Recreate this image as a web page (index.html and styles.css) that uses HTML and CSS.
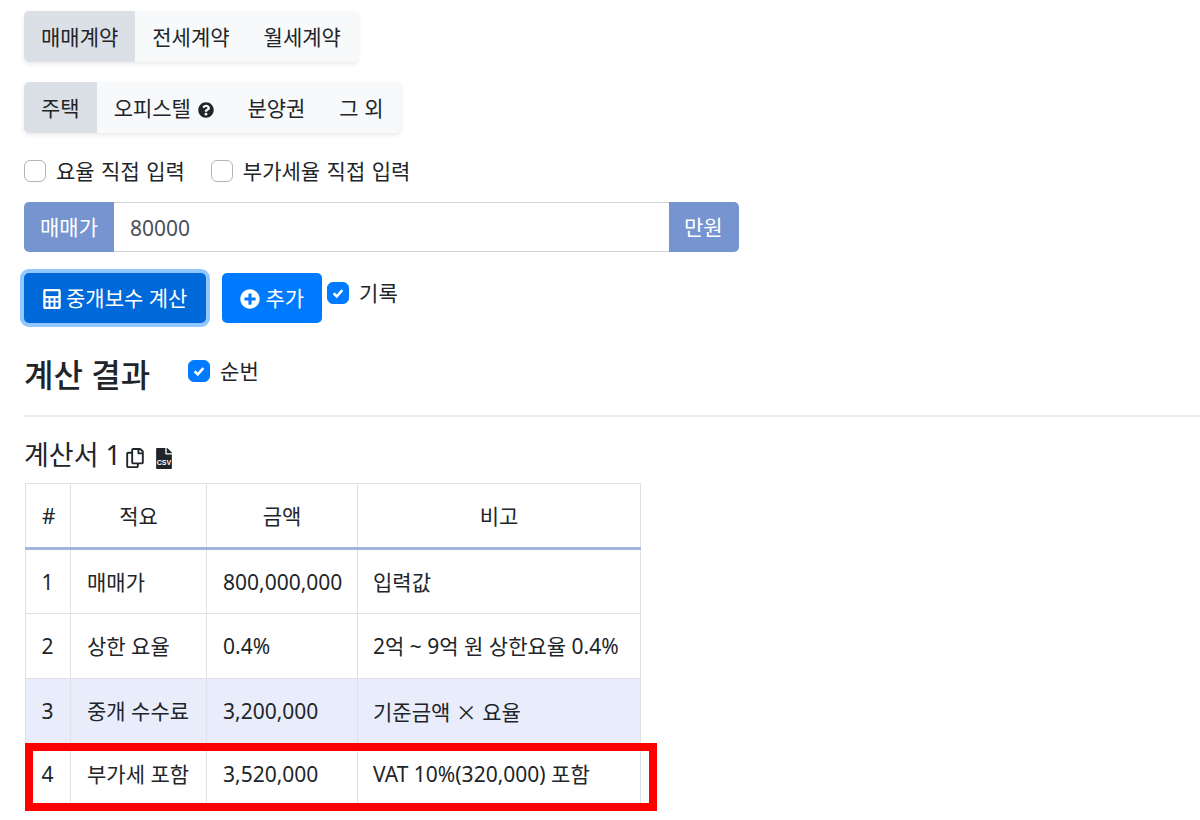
FILE: index.html
```html
<!DOCTYPE html>
<html lang="ko">
<head>
  <meta charset="UTF-8" />
  <title>중개보수 계산</title>
  <link rel="stylesheet" href="styles.css">
</head>
<body>
  <div class="btn-group">
    <button class="seg active">매매계약</button>
    <button class="seg">전세계약</button>
    <button class="seg">월세계약</button>
  </div>

  <div class="btn-group second">
    <button class="seg active">주택</button>
    <button class="seg">오피스텔
      <svg class="icon-help" viewBox="0 0 512 512"><path d="M504 256c0 137-111 248-248 248S8 393 8 256 119 8 256 8s248 111 248 248zM263 90c-55 0-90 23-117 64-4 5-3 12 3 16l35 26c5 4 13 3 17-2 18-23 30-36 58-36 21 0 46 13 46 33 0 15-12 23-33 34-23 14-55 31-55 73v4c0 7 5 12 12 12h56c7 0 12-5 12-12v-2c0-29 85-30 85-109 0-59-62-101-119-101zm-7 252c-26 0-47 21-47 46s21 46 47 46 47-21 47-46-21-46-47-46z"/></svg>
    </button>
    <button class="seg">분양권</button>
    <button class="seg">그 외</button>
  </div>

  <div class="check-row">
    <label class="check"><span class="box"></span>요율 직접 입력</label>
    <label class="check"><span class="box"></span>부가세율 직접 입력</label>
  </div>

  <div class="input-group">
    <span class="addon addon-left">매매가</span>
    <input class="price" type="text" value="80000" />
    <span class="addon addon-right">만원</span>
  </div>

  <div class="action-row">
    <button class="btn btn-focus">
      <svg class="icon-calc" viewBox="0 0 448 512"><path d="M400 0H48C22 0 0 22 0 48v416c0 26 22 48 48 48h352c26 0 48-22 48-48V48c0-26-22-48-48-48zM60 60h328v116H60V60zm0 176h76v64H60v-64zm0 112h76v104H60V348zm126-112h76v64h-76v-64zm0 112h76v104h-76V348zm126-112h76v64h-76v-64zm0 112h76v104h-76V348z"/></svg>
      중개보수 계산
    </button>
    <button class="btn">
      <svg class="icon-plus" viewBox="0 0 512 512"><path d="M256 8C119 8 8 119 8 256s111 248 248 248 248-111 248-248S393 8 256 8zm144 276c0 7-5 12-12 12h-92v92c0 7-5 12-12 12h-56c-7 0-12-5-12-12v-92h-92c-7 0-12-5-12-12v-56c0-7 5-12 12-12h92v-92c0-7 5-12 12-12h56c7 0 12 5 12 12v92h92c7 0 12 5 12 12v56z"/></svg>
      추가
    </button>
    <label class="check record"><span class="box checked"><svg viewBox="0 0 16 16"><path d="M4.5 8.2l2.5 2.5 4.5-5"/></svg></span>기록</label>
  </div>

  <div class="result-head">
    <h2>계산 결과</h2>
    <label class="check"><span class="box checked"><svg viewBox="0 0 16 16"><path d="M4.5 8.2l2.5 2.5 4.5-5"/></svg></span>순번</label>
  </div>
  <hr />

  <h3 class="sheet-title">계산서 1
    <svg class="icon-copy" viewBox="0 0 448 512"><path d="M433 65L383 15C373 5 361 0 349 0H176c-27 0-48 21-48 48v48H48c-27 0-48 21-48 48v320c0 27 21 48 48 48h224c27 0 48-21 48-48v-48h80c27 0 48-21 48-48V99c0-12-5-25-15-34zM266 464H54c-3 0-6-3-6-6V150c0-3 3-6 6-6h74v224c0 27 21 48 48 48h96v42c0 3-3 6-6 6zm128-96H182c-3 0-6-3-6-6V54c0-3 3-6 6-6h106v88c0 13 11 24 24 24h88v202c0 3-3 6-6 6zm6-256h-64V48h10c2 0 3 1 4 2l48 48c1 1 2 3 2 4v10z"/></svg>
    <svg class="icon-csv" viewBox="0 0 384 512"><path d="M224 136V0H24C11 0 0 11 0 24v464c0 13 11 24 24 24h336c13 0 24-11 24-24V160H248c-13 0-24-11-24-24zM377 105L279 7c-5-5-11-7-17-7h-6v128h128v-6c0-6-2-12-7-17z"/><text class="csv-text" x="192" y="410" text-anchor="middle">CSV</text></svg>
  </h3>

  <div class="table-wrap">
    <table>
      <thead>
        <tr><th class="col-no">#</th><th class="col-name">적요</th><th class="col-amount">금액</th><th class="col-note">비고</th></tr>
      </thead>
      <tbody>
        <tr><td class="center">1</td><td>매매가</td><td>800,000,000</td><td class="note">입력값</td></tr>
        <tr><td class="center">2</td><td>상한 요율</td><td>0.4%</td><td class="note">2억 ~ 9억 원 상한요율 0.4%</td></tr>
        <tr class="highlight"><td class="center">3</td><td>중개 수수료</td><td>3,200,000</td><td class="note">기준금액 <span class="times">×</span> 요율</td></tr>
        <tr class="last"><td class="center">4</td><td>부가세 포함</td><td>3,520,000</td><td class="note">VAT 10%(320,000) 포함</td></tr>
      </tbody>
    </table>
    <div class="red-box"></div>
  </div>
</body>
</html>
```

FILE: styles.css
```css
* {
  box-sizing: border-box;
}

html, body {
  height: 820px;
  overflow: hidden;
}

body {
  margin: 0;
  padding: 11px 0 0 24px;
  background: #fff;
  color: #212529;
  font-family: "Noto Sans", "Noto Sans CJK KR", sans-serif;
  font-size: 21px;
  line-height: 30px;
}

button {
  font: inherit;
  color: inherit;
  border: none;
}

.btn-group {
  display: inline-flex;
  height: 51px;
  background: #f8f9fa;
  border-radius: 5px;
  box-shadow: 0 2px 5px rgba(0, 0, 0, 0.09);
  vertical-align: top;
}

.second {
  display: flex;
  width: fit-content;
  margin-top: 20px;
}

.seg {
  padding: 0 17px;
  background: transparent;
  white-space: nowrap;
}

.second .seg:last-child {
  padding-right: 18px;
}

.seg.active {
  background: #dae0e5;
  border-radius: 5px 0 0 5px;
}

.icon-help {
  width: 16px;
  height: 16px;
  margin-left: 2px;
  margin-right: -1px;
  vertical-align: -2px;
  fill: #212529;
}

.check-row {
  display: flex;
  gap: 26px;
  margin-top: 22px;
  height: 32px;
  align-items: center;
  word-spacing: 1px;
}

.check {
  display: inline-flex;
  align-items: center;
  gap: 10px;
}

.box {
  width: 22px;
  height: 22px;
  border: 1px solid #adb5bd;
  border-radius: 6px;
  background: #fff;
}

.box.checked {
  background: #007bff;
  border-color: #007bff;
}

.box svg {
  display: block;
  width: 20px;
  height: 20px;
  fill: none;
  stroke: #fff;
  stroke-width: 2;
}

.input-group {
  display: flex;
  width: 715px;
  height: 50px;
  margin-top: 15px;
}

.addon {
  display: flex;
  align-items: center;
  padding: 0 16px;
  background: #7695d0;
  color: #fff;
}

.addon-left {
  width: 90px;
  border-radius: 5px 0 0 5px;
}

.addon-right {
  width: 70px;
  padding: 0 15px;
  border-radius: 0 5px 5px 0;
}

.price {
  flex: 1;
  min-width: 0;
  padding: 2px 16px 0;
  border: 1px solid #ced4da;
  border-left: none;
  border-right: none;
  font: inherit;
  color: #495057;
}

.action-row {
  display: flex;
  margin-top: 21px;
  height: 50px;
}

.btn {
  height: 50px;
  padding: 0 18px;
  margin-right: 16px;
  background: #007bff;
  color: #fff;
  border-radius: 5px;
  white-space: nowrap;
}

.btn + .btn {
  margin-right: 5px;
}

.btn-focus {
  width: 182px;
  padding: 0;
  background: #0069d9;
  box-shadow: 0 0 0 4px rgba(38, 143, 255, 0.5);
}

.icon-calc {
  width: 18px;
  height: 20px;
  vertical-align: -3px;
  fill: #fff;
}

.icon-plus {
  width: 20px;
  height: 20px;
  vertical-align: -3px;
  fill: #fff;
}

.record {
  height: 40px;
}

.result-head {
  display: flex;
  align-items: flex-start;
  gap: 38px;
  margin-top: 24px;
  height: 68px;
}

.result-head h2 {
  margin: 0;
  font-size: 32px;
  line-height: 56px;
  font-weight: 500;
}

.result-head .check {
  margin-top: 8px;
  height: 32px;
}

hr {
  margin: 0;
  border: none;
  border-top: 2px solid #e9ecef;
}

.sheet-title {
  margin: 20px 0 0;
  font-size: 27px;
  line-height: 36px;
  font-weight: 400;
}

.icon-copy {
  width: 18px;
  height: 20px;
  margin-left: -2px;
  vertical-align: -3px;
  fill: #212529;
}

.icon-csv {
  width: 16px;
  height: 21px;
  margin-left: 5px;
  vertical-align: -4px;
  fill: #212529;
}

.csv-text {
  fill: #fff;
  font-family: "Liberation Sans", sans-serif;
  font-size: 170px;
  font-weight: 700;
}

.table-wrap {
  position: relative;
  margin-top: 10px;
  width: 657px;
}

table {
  border-collapse: collapse;
  table-layout: fixed;
  width: 616px;
  margin-left: 1px;
}

th, td {
  border: 1px solid #dee2e6;
  padding: 0 16px;
  height: 65px;
  white-space: nowrap;
}

th {
  font-weight: 400;
  text-align: center;
  border-bottom: 3px solid #a0b5e0;
}

.col-no { width: 45px; }
.col-name { width: 136px; }
.col-amount { width: 151px; }

.center {
  text-align: center;
  padding: 0 16px 0 15px;
}

.note {
  padding-left: 15px;
}

.times {
  font-family: "Noto Sans CJK KR", sans-serif;
}

.highlight td {
  background: #e9edfb;
}

.last td {
  height: 60px;
}

.red-box {
  position: absolute;
  left: 1px;
  top: 260px;
  width: 632px;
  height: 68px;
  border: 8px solid #fe0000;
}
```
